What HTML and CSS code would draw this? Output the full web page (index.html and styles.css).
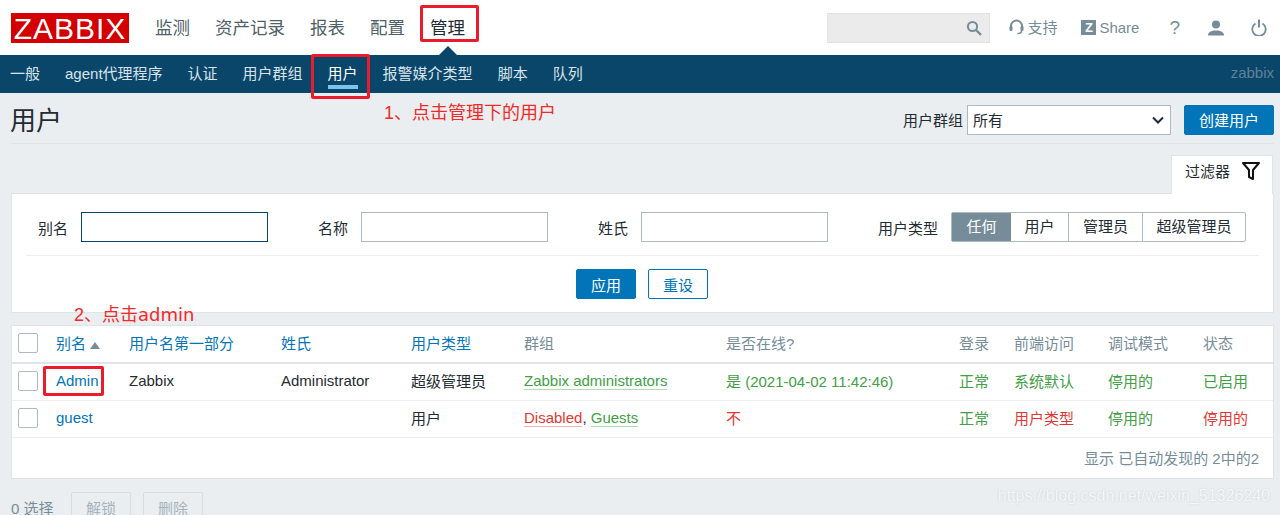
FILE: index.html
```html
<!DOCTYPE html>
<html lang="zh-CN">
<head>
    <meta charset="UTF-8">
    <title>用户</title>
    <link rel="stylesheet" href="styles.css">
</head>
<body>
    <header class="top">
        <div class="logo">ZABBIX</div>
        <nav class="main-menu">
            <a>监测</a>
            <a>资产记录</a>
            <a>报表</a>
            <a>配置</a>
            <a class="selected">管理</a>
        </nav>
        <div class="top-tools">
            <div class="search">
                <svg width="16" height="16" viewBox="0 0 16 16"><circle cx="6.5" cy="6.5" r="4.6" fill="none" stroke="#768d99" stroke-width="2"/><path d="M10 10l5 5" stroke="#768d99" stroke-width="2.4"/></svg>
            </div>
            <a class="tool support">
                <svg width="15" height="16" viewBox="0 0 15 16"><path d="M2 9V7a5.5 5.5 0 0 1 11 0v2" fill="none" stroke="#768d99" stroke-width="2"/><rect x="0.5" y="7" width="3" height="5" rx="1.2" fill="#768d99"/><rect x="11.5" y="7" width="3" height="5" rx="1.2" fill="#768d99"/><path d="M12.5 12c0 1.800-1.500 2.500-4 2.500" fill="none" stroke="#768d99" stroke-width="1.500"/></svg>
                支持
            </a>
            <a class="tool share"><span class="z-box">Z</span>Share</a>
            <a class="tool help">?</a>
            <a class="tool user">
                <svg width="16" height="16" viewBox="0 0 16 16"><circle cx="8" cy="4.500" r="4" fill="#768d99"/><path d="M0 15.500c0-3.500 3-5 8-5s8 1.500 8 5z" fill="#768d99"/></svg>
            </a>
            <a class="tool power">
                <svg width="16" height="17" viewBox="0 0 16 17"><path d="M4.500 4.500a6.700 6.700 0 1 0 7 0" fill="none" stroke="#768d99" stroke-width="1.800"/><path d="M8 0.500v8" stroke="#768d99" stroke-width="2"/></svg>
            </a>
        </div>
    </header>

    <nav class="sub-menu">
        <a>一般</a>
        <a>agent代理程序</a>
        <a>认证</a>
        <a>用户群组</a>
        <a class="selected">用户</a>
        <a>报警媒介类型</a>
        <a>脚本</a>
        <a>队列</a>
        <span class="server-name">zabbix</span>
    </nav>

    <main class="content">
        <div class="page-head">
            <h1>用户</h1>
            <div class="head-controls">
                <label>用户群组</label>
                <div class="select-box">
                    所有
                    <svg width="12" height="8" viewBox="0 0 12 8"><path d="M1 1.500l5 5 5-5" fill="none" stroke="#1f2c33" stroke-width="2"/></svg>
                </div>
                <button class="btn create">创建用户</button>
            </div>
        </div>

        <div class="filter-tabs">
            <div class="filter-tab">
                过滤器
                <svg width="18" height="18" viewBox="0 0 18 18"><path d="M1 1h16l-6 7v9l-4-2V8z" fill="none" stroke="#111" stroke-width="2" stroke-linejoin="round"/></svg>
            </div>
        </div>

        <section class="filter">
            <div class="filter-row">
                <label class="first-label">别名</label>
                <input type="text" class="field focused">
                <label>名称</label>
                <input type="text" class="field">
                <label>姓氏</label>
                <input type="text" class="field">
                <label>用户类型</label>
                <div class="segments">
                    <span class="seg on">任何</span>
                    <span class="seg s-user">用户</span>
                    <span class="seg s-admin">管理员</span>
                    <span class="seg s-super">超级管理员</span>
                </div>
            </div>
            <div class="filter-actions">
                <button class="btn">应用</button>
                <button class="btn alt">重设</button>
            </div>
        </section>

        <section class="list">
            <table>
                <colgroup>
                    <col class="c-check"><col class="c-alias"><col class="c-name"><col class="c-surname">
                    <col class="c-type"><col class="c-groups"><col class="c-online"><col class="c-login">
                    <col class="c-front"><col class="c-debug"><col class="c-status">
                </colgroup>
                <thead>
                    <tr>
                        <th><input type="checkbox" class="check"></th>
                        <th class="link">别名<span class="sort-arrow"></span></th>
                        <th class="link">用户名第一部分</th>
                        <th class="link">姓氏</th>
                        <th class="link">用户类型</th>
                        <th>群组</th>
                        <th>是否在线?</th>
                        <th>登录</th>
                        <th>前端访问</th>
                        <th>调试模式</th>
                        <th>状态</th>
                    </tr>
                </thead>
                <tbody>
                    <tr>
                        <td><input type="checkbox" class="check"></td>
                        <td><a class="link">Admin</a></td>
                        <td>Zabbix</td>
                        <td>Administrator</td>
                        <td>超级管理员</td>
                        <td><a class="green group-link">Zabbix administrators</a></td>
                        <td class="green">是 (2021-04-02 11:42:46)</td>
                        <td class="green">正常</td>
                        <td class="green">系统默认</td>
                        <td class="green">停用的</td>
                        <td class="green">已启用</td>
                    </tr>
                    <tr>
                        <td><input type="checkbox" class="check"></td>
                        <td><a class="link">guest</a></td>
                        <td></td>
                        <td></td>
                        <td>用户</td>
                        <td><a class="red group-link">Disabled</a>, <a class="green group-link">Guests</a></td>
                        <td class="red">不</td>
                        <td class="green">正常</td>
                        <td class="red">用户类型</td>
                        <td class="green">停用的</td>
                        <td class="red">停用的</td>
                    </tr>
                </tbody>
            </table>
            <div class="list-footer">显示 已自动发现的 2中的2</div>
        </section>

        <div class="actions">
            <span class="selected-count">0 选择</span>
            <button class="btn-off">解锁</button>
            <button class="btn-off">删除</button>
        </div>
    </main>

    <!-- screenshot annotations -->
    <div class="mark mark-admin-menu"></div>
    <div class="mark mark-users-menu"></div>
    <div class="mark mark-admin-row"></div>
    <div class="note note-one">1、点击管理下的用户</div>
    <div class="note note-two">2、点击<span class="note-latin">admin</span></div>
    <div class="watermark">https://blog.csdn.net/weixin_51326240</div>
</body>
</html>
```

FILE: styles.css
```css
html, body {
    margin: 0;
    height: 515px;
    overflow: hidden;
}

body {
    position: relative;
    background-color: #ebeef0;
    color: #1f2c33;
    font-family: "Liberation Sans", "Noto Sans CJK SC", sans-serif;
    font-size: 15px;
}

.top {
    display: flex;
    align-items: center;
    height: 55px;
    padding-left: 11px;
    background-color: #fff;
}

.logo {
    width: 118px;
    height: 30px;
    margin-top: 1px;
    background-color: #d40000;
    color: #fff;
    font-size: 30px;
    letter-spacing: 1px;
    line-height: 31px;
    text-align: center;
}

.main-menu {
    display: flex;
    gap: 25px;
    margin-left: 26px;
    margin-top: -3px;
    font-size: 17.500px;
    color: #4f5f68;
}

.main-menu .selected {
    position: relative;
    color: #1f2c33;
}

.main-menu .selected::after {
    content: "";
    position: absolute;
    left: 8px;
    top: 32px;
    border-left: 10px solid transparent;
    border-right: 10px solid transparent;
    border-bottom: 10px solid #0a466a;
}

.top-tools {
    display: flex;
    align-items: center;
    margin-left: auto;
    color: #768d99;
}

.search {
    display: flex;
    align-items: center;
    justify-content: flex-end;
    box-sizing: border-box;
    width: 163px;
    height: 30px;
    padding-right: 7px;
    background-color: #ebebeb;
    border: 1px solid #e3e3e3;
}

.tool {
    display: flex;
    align-items: center;
}

.support {
    gap: 3px;
    margin-left: 19px;
    margin-top: -2px;
}

.share {
    margin-left: 24px;
    margin-top: -1px;
}

.z-box {
    width: 15px;
    height: 15px;
    margin-right: 3px;
    background-color: #768d99;
    color: #fff;
    font-size: 13px;
    font-weight: bold;
    line-height: 15px;
    text-align: center;
}

.help {
    margin-left: 30px;
    font-size: 19px;
}

.user {
    margin-left: 28px;
}

.power {
    margin-left: 27px;
    margin-right: 13px;
}

.sub-menu {
    display: flex;
    align-items: center;
    gap: 25px;
    height: 35px;
    padding: 0 6px 3px 10px;
    background-color: #0a466a;
    color: #d9e4ea;
}

.sub-menu .selected {
    position: relative;
    color: #fff;
}

.sub-menu .selected::after {
    content: "";
    position: absolute;
    left: 0;
    right: 0;
    top: 23px;
    height: 4px;
    background-color: #7cc4ee;
}

.server-name {
    margin-left: auto;
    color: #5f8297;
}

.content {
    padding: 0 6px 0 11px;
}

.page-head {
    display: flex;
    align-items: center;
    justify-content: space-between;
    height: 50px;
    border-bottom: 1px solid #dfe4e7;
}

h1 {
    margin: 0 0 0 -1px;
    font-size: 26px;
    font-weight: normal;
}

.head-controls {
    display: flex;
    align-items: center;
    gap: 4px;
    margin-top: 3px;
}

.select-box {
    display: flex;
    align-items: center;
    justify-content: space-between;
    box-sizing: border-box;
    width: 204px;
    height: 30px;
    padding: 0 6px 0 5px;
    background-color: #fff;
    border: 1px solid #acbbc3;
}

.btn {
    height: 30px;
    padding: 0 14px;
    background-color: #0275b8;
    border: 1px solid #0275b8;
    border-radius: 2px;
    color: #fff;
    font: inherit;
}

.create {
    margin-left: 9px;
}

.btn.alt {
    background-color: #fff;
    color: #0275b8;
}

.filter-tabs {
    display: flex;
    justify-content: flex-end;
    margin-top: 11px;
    padding-right: 1px;
}

.filter-tab {
    display: flex;
    align-items: flex-start;
    gap: 12px;
    box-sizing: border-box;
    width: 102px;
    height: 39px;
    margin-bottom: -1px;
    padding: 6px 0 0 13px;
    position: relative;
    background-color: #fff;
    border: 1px solid #dfe4e7;
    border-bottom: none;
    line-height: 20px;
}

.filter {
    box-sizing: border-box;
    height: 120px;
    background-color: #fff;
    border: 1px solid #dfe4e7;
}

.filter-row {
    display: flex;
    align-items: center;
    height: 56px;
    margin: 0 14px;
    padding-top: 5px;
    border-bottom: 1px solid #ebeef0;
}

.first-label {
    margin-left: 12px;
}

.filter-row label {
    margin-right: 13px;
}

.field {
    box-sizing: border-box;
    width: 187px;
    height: 30px;
    margin-right: 50px;
    padding: 0 5px;
    background-color: #fff;
    border: 1px solid #acbbc3;
    outline: none;
}

.field.focused {
    border-color: #0a466a;
}

.segments {
    display: flex;
    height: 30px;
    line-height: 28px;
    text-align: center;
    background-color: #fff;
    border: 1px solid #acbbc3;
    border-radius: 2px;
    box-sizing: border-box;
}

.seg {
    box-sizing: border-box;
    border-right: 1px solid #acbbc3;
}

.seg.on {
    width: 59px;
    background-color: #768d99;
    color: #fff;
    border-right: none;
}

.s-user {
    width: 58px;
}

.s-admin {
    width: 74px;
}

.s-super {
    flex: 1;
    width: 102px;
    border-right: none;
}

.filter-actions {
    display: flex;
    justify-content: center;
    gap: 12px;
    margin-top: 13px;
    padding-right: 1px;
}

.filter-actions .btn {
    width: 60px;
    padding: 0;
}

.list {
    box-sizing: border-box;
    height: 154px;
    margin-top: 12px;
    background-color: #fff;
    border: 1px solid #dfe4e7;
}

table {
    width: 100%;
    border-collapse: collapse;
    table-layout: fixed;
}

.c-check { width: 44px; }
.c-alias { width: 73px; }
.c-name { width: 152px; }
.c-surname { width: 130px; }
.c-type { width: 113px; }
.c-groups { width: 202px; }
.c-online { width: 233px; }
.c-login { width: 55px; }
.c-front { width: 94px; }
.c-debug { width: 95px; }

th {
    height: 32px;
    padding: 0 0 4px;
    border-bottom: 2px solid #dfe4e7;
    color: #768d99;
    font-weight: normal;
    text-align: left;
}

td {
    height: 33px;
    padding: 0 0 3px;
    border-bottom: 1px solid #ebeef0;
}

th:first-child, td:first-child {
    padding: 0 0 2px 6px;
}

.check {
    display: block;
    appearance: none;
    box-sizing: border-box;
    width: 20px;
    height: 20px;
    margin: 0;
    background-color: #fff;
    border: 1px solid #acbbc3;
    border-radius: 2px;
}

.link {
    color: #0275b8;
}

th.link {
    color: #0275b8;
}

.green {
    color: #429e47;
}

.red {
    color: #e33734;
}

.group-link {
    border-bottom: 1px solid #b5d8b7;
}

.group-link.red {
    border-bottom-color: #f0b5b4;
}

.sort-arrow {
    display: inline-block;
    margin-left: 4px;
    border-left: 5px solid transparent;
    border-right: 5px solid transparent;
    border-bottom: 7px solid #768d99;
}

.list-footer {
    padding: 9px 14px 0 0;
    color: #768d99;
    text-align: right;
}

.actions {
    display: flex;
    align-items: center;
    margin-top: 13px;
    color: #768d99;
}

.selected-count {
    width: 60px;
}

.btn-off {
    width: 60px;
    height: 30px;
    margin-right: 12px;
    padding: 0;
    background-color: #ebeef0;
    border: 1px solid #d5dce0;
    border-radius: 2px;
    color: #a6b4bc;
    font: inherit;
}

.mark {
    position: absolute;
    box-sizing: border-box;
    border: 3px solid #ea1c2c;
    border-radius: 2px;
}

.mark-admin-menu {
    left: 420px;
    top: 5px;
    width: 59px;
    height: 37px;
}

.mark-users-menu {
    left: 311px;
    top: 54px;
    width: 59px;
    height: 45px;
}

.mark-admin-row {
    left: 43px;
    top: 366px;
    width: 61px;
    height: 30px;
}

.note {
    position: absolute;
    color: #f02a2a;
    font-size: 18px;
    line-height: 22px;
}

.note-latin {
    font-family: "DejaVu Sans", sans-serif;
}

.note-one {
    left: 384px;
    top: 102px;
}

.note-two {
    left: 74px;
    top: 304px;
}

.watermark {
    position: absolute;
    right: 10px;
    top: 487px;
    color: #f4f6f7;
    font-size: 16px;
    text-shadow: 0 0 2px #c6cbce;
}
```
